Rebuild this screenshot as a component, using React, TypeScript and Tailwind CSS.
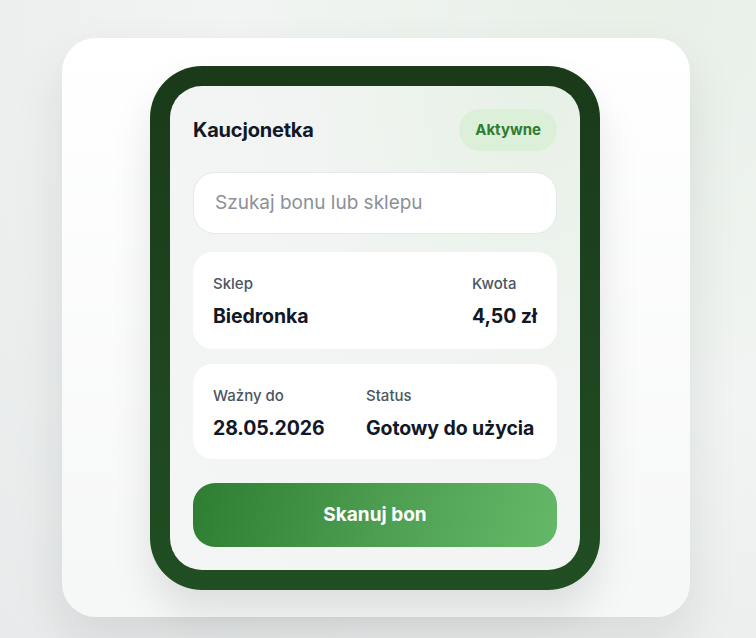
// Voucher scanner card shown inside a phone frame.

const font = { fontFamily: "Inter, 'Noto Sans', sans-serif" }

function InfoCell({ label, value, className }: { label: string; value: string; className?: string }) {
  return (
    <div className={className}>
      <p className="text-[15px] font-medium leading-5 text-[#4b5563]">{label}</p>
      <p className="mt-[10px] whitespace-nowrap text-[19.5px] font-bold leading-6 tracking-[-0.1px] text-[#111827]">
        {value}
      </p>
    </div>
  )
}

export default function App() {
  return (
    <div
      className="flex h-[638px] w-full justify-center overflow-hidden bg-[radial-gradient(ellipse_at_85%_0%,#e8f0e8_0%,#f1f4f2_45%,#e8eaeb_100%)] pr-[4px] pt-[38px]"
      style={font}
    >
      <div className="flex h-[579px] w-[628px] justify-center rounded-[34px] bg-gradient-to-b from-white to-[#f6f7f7] pr-[2px] pt-[28px] shadow-[0_24px_50px_rgba(20,30,25,0.10)]">
        <div className="h-[524px] w-[450px] rounded-[52px] bg-gradient-to-b from-[#1a3a1a] to-[#214e23] p-[20px] shadow-[0_24px_40px_rgba(0,0,0,0.10)]">
          <div className="flex h-full flex-col rounded-[32px] bg-[radial-gradient(ellipse_at_90%_0%,#e7f1e6_0%,#f1f4f2_45%,#f4f6f6_100%)] px-[23px] pt-[23px]">
            <div className="flex items-center justify-between">
              <h1 className="text-[20px] font-bold tracking-[-0.2px] text-[#111827]">Kaucjonetka</h1>
              <span className="flex h-[42px] items-center rounded-full bg-[#dcefd8] px-[16px] text-[15px] font-bold text-[#2e7d32]">
                Aktywne
              </span>
            </div>

            <div className="mt-[21px] flex h-[62px] items-center rounded-[22px] border border-[#e5e7eb] bg-white px-[21px]">
              <span className="text-[19px] text-[#8b9099]">Szukaj bonu lub sklepu</span>
            </div>

            <div className="mt-[18px] flex h-[97px] items-start justify-between rounded-[20px] bg-white px-[20px] pt-[22px]">
              <InfoCell label="Sklep" value="Biedronka" />
              <InfoCell label="Kwota" value="4,50 zł" />
            </div>

            <div className="mt-[15px] flex h-[95px] items-start rounded-[20px] bg-white px-[20px] pt-[22px]">
              <InfoCell label="Ważny do" value="28.05.2026" className="w-[153px] shrink-0" />
              <InfoCell label="Status" value="Gotowy do użycia" />
            </div>

            <button
              type="button"
              className="mt-[24px] flex h-[64px] items-center justify-center rounded-[22px] bg-[linear-gradient(105deg,#2e7d32_0%,#4c9d50_50%,#66b869_100%)] text-[19px] font-bold text-white"
            >
              Skanuj bon
            </button>
          </div>
        </div>
      </div>
    </div>
  )
}
